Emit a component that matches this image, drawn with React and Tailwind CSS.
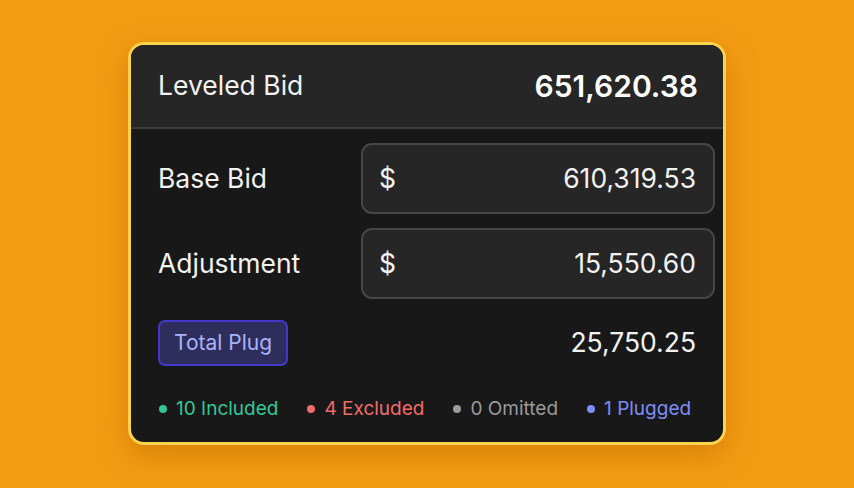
export default function App() {
  const legend = [
    { label: "10 Included", dot: "bg-[#34c796]", text: "text-[#34c796]" },
    { label: "4 Excluded", dot: "bg-[#f26b6b]", text: "text-[#f26b6b]" },
    { label: "0 Omitted", dot: "bg-[#9a9a9a]", text: "text-[#9a9a9a]" },
    { label: "1 Plugged", dot: "bg-[#7f8cf5]", text: "text-[#7f8cf5]" },
  ];
  return (
    <div
      className="w-[854px] h-[488px] bg-[#f39c12] flex items-start justify-center pt-[42px]"
      style={{ fontFamily: "Inter, 'Noto Sans', sans-serif" }}
    >
      <div className="w-[598px] h-[403px] rounded-[16px] border-[3px] border-[#fcd34d] bg-[#181818] overflow-hidden shadow-[0_10px_30px_rgba(160,80,0,0.35)] flex flex-col">
        <div className="h-[84px] shrink-0 bg-[#262626] border-b-2 border-[#3c3c3c] flex items-center justify-between pl-[27px] pr-[25px]">
          <span className="text-[26.5px] text-[#f2f2f2]">Leveled Bid</span>
          <span className="text-[30px] font-semibold text-white">651,620.38</span>
        </div>
        <div className="flex flex-col pl-[27px] pr-[8px] pt-[14px]">
          <div className="flex items-center justify-between">
            <span className="text-[26.5px] text-[#f2f2f2]">Base Bid</span>
            <div className="w-[354px] h-[71px] rounded-[11px] border-2 border-[#464646] bg-[#262626] flex items-center justify-between pl-[16px] pr-[17px] text-[26.5px] text-[#f2f2f2]">
              <span>$</span>
              <span>610,319.53</span>
            </div>
          </div>
          <div className="flex items-center justify-between mt-[14px]">
            <span className="text-[26.5px] text-[#f2f2f2]">Adjustment</span>
            <div className="w-[354px] h-[71px] rounded-[11px] border-2 border-[#464646] bg-[#262626] flex items-center justify-between pl-[16px] pr-[17px] text-[26.5px] text-[#f2f2f2]">
              <span>$</span>
              <span>15,550.60</span>
            </div>
          </div>
          <div className="flex items-center justify-between mt-[21px] pr-[19px]">
            <span className="h-[46px] px-[14px] rounded-[7px] border-2 border-[#4338ca] bg-[#2e2d5c] text-[#a8b4fb] text-[21px] flex items-center">
              Total Plug
            </span>
            <span className="text-[26.5px] text-[#f2f2f2]">25,750.25</span>
          </div>
          <div className="flex items-center gap-[29px] mt-[29px] pl-[1px]">
            {legend.map((l) => (
              <div key={l.label} className="flex items-center gap-[9px]">
                <span className={`w-[8px] h-[8px] rounded-full ${l.dot}`} />
                <span className={`text-[19px] ${l.text}`}>{l.label}</span>
              </div>
            ))}
          </div>
        </div>
      </div>
    </div>
  );
}
